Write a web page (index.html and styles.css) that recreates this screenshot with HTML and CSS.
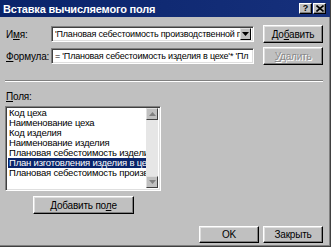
FILE: index.html
```html
<!DOCTYPE html>
<html>

<head>
    <meta charset="utf-8">
    <title>Вставка вычисляемого поля</title>
    <link rel="stylesheet" href="styles.css">
</head>

<body>
    <div class="dialog">
        <div class="titlebar">
            <span class="title">Вставка вычисляемого поля</span>
            <div class="caption-btns">
                <span class="cbtn">?</span>
                <span class="cbtn">
                    <svg width="8" height="7" viewBox="0 0 8 7">
                        <path d="M0.5 0.5 L7.5 6.5 M7.5 0.5 L0.5 6.5" stroke="#000" stroke-width="1.6" />
                    </svg>
                </span>
            </div>
        </div>

        <div class="content">
            <div class="row">
                <span class="lbl">И<u>м</u>я:</span>
                <div class="field combo">
                    <span class="text">'Плановая себестоимость производственной п</span>
                    <span class="drop">
                        <svg width="7" height="4" viewBox="0 0 7 4"><path d="M0 0 H7 L3.5 4 Z" fill="#000" /></svg>
                    </span>
                </div>
                <button class="btn side">До<u>б</u>авить</button>
            </div>
            <div class="row">
                <span class="lbl"><u>Ф</u>ормула:</span>
                <div class="field">
                    <span class="text">= 'Плановая себестоимость изделия в цехе'* 'Пл</span>
                </div>
                <button class="btn side disabled"><u>У</u>далить</button>
            </div>

            <div class="sep"></div>

            <span class="lbl fields-lbl"><u>П</u>оля:</span>
            <div class="list">
                <ul class="items">
                    <li>Код цеха</li>
                    <li>Наименование цеха</li>
                    <li>Код изделия</li>
                    <li>Наименование изделия</li>
                    <li>Плановая себестоимость изделия</li>
                    <li class="selected">План изготовления изделия в цех</li>
                    <li>Плановая себестоимость произво</li>
                </ul>
                <div class="scrollbar">
                    <span class="arrow">
                        <svg width="7" height="4" viewBox="0 0 7 4"><path d="M0 4 H7 L3.5 0 Z" fill="#808080" /></svg>
                    </span>
                    <span class="track"></span>
                    <span class="arrow">
                        <svg width="7" height="4" viewBox="0 0 7 4"><path d="M0 0 H7 L3.5 4 Z" fill="#808080" /></svg>
                    </span>
                </div>
            </div>

            <button class="btn add-field">Добавить по<u>л</u>е</button>

            <div class="footer">
                <button class="btn foot">OK</button>
                <button class="btn foot">Закрыть</button>
            </div>
        </div>
    </div>
</body>

</html>
```

FILE: styles.css
```css
body {
    margin: 0;
    padding: 0;
    background-color: #ffffff;
    font-family: "Liberation Sans", Arial, sans-serif;
    font-size: 10px;
    letter-spacing: -0.2px;
    color: #000000;
}

.dialog {
    width: 331px;
    height: 247px;
    box-sizing: border-box;
    background-color: #c0c0c0;
    border-right: 1px solid #404040;
    border-bottom: 1px solid #404040;
    box-shadow: inset -1px -1px 0 #808080;
    display: flex;
    flex-direction: column;
}

.titlebar {
    height: 17px;
    flex: none;
    display: flex;
    align-items: center;
    justify-content: space-between;
    padding: 0 4px 0 3px;
    background: linear-gradient(to right, #0a246a, #16307c);
}

.title {
    color: #ffffff;
    font-weight: bold;
    font-size: 11px;
    letter-spacing: -0.2px;
}

.caption-btns {
    display: flex;
    gap: 1px;
}

.cbtn {
    width: 13px;
    height: 11px;
    box-sizing: border-box;
    background-color: #c0c0c0;
    border-top: 1px solid #ffffff;
    border-left: 1px solid #ffffff;
    border-right: 1px solid #000000;
    border-bottom: 1px solid #000000;
    box-shadow: inset -1px -1px 0 #808080;
    display: flex;
    align-items: center;
    justify-content: center;
    font-weight: bold;
    font-size: 9px;
    line-height: 9px;
}

.content {
    flex: 1;
    padding: 8px 7px 0 5px;
    display: flex;
    flex-direction: column;
}

.row {
    display: flex;
    align-items: center;
    height: 18px;
    margin-bottom: 4px;
}

.lbl {
    width: 45px;
    padding-left: 1px;
    flex: none;
}

.field {
    width: 204px;
    min-width: 0;
    height: 16px;
    box-sizing: border-box;
    background-color: #ffffff;
    border-top: 1px solid #808080;
    border-left: 1px solid #808080;
    border-right: 1px solid #ffffff;
    border-bottom: 1px solid #ffffff;
    box-shadow: inset 1px 1px 0 #404040, inset -1px -1px 0 #dfdfdf;
    display: flex;
    align-items: center;
    overflow: hidden;
    padding-left: 3px;
}

.field .text {
    font-size: 9px;
    letter-spacing: -0.2px;
    white-space: nowrap;
    overflow: hidden;
    flex: 1;
    min-width: 0;
}

.combo {
    width: 203px;
    padding-right: 2px;
}

.drop {
    width: 11px;
    height: 12px;
    flex: none;
    box-sizing: border-box;
    background-color: #c0c0c0;
    border-top: 1px solid #dfdfdf;
    border-left: 1px solid #dfdfdf;
    border-right: 1px solid #000000;
    border-bottom: 1px solid #000000;
    display: flex;
    align-items: center;
    justify-content: center;
}

.btn {
    font-family: "Liberation Sans", Arial, sans-serif;
    font-size: 10px;
    letter-spacing: -0.2px;
    color: #000000;
    background-color: #c0c0c0;
    box-sizing: border-box;
    border-top: 1px solid #ffffff;
    border-left: 1px solid #ffffff;
    border-right: 1px solid #000000;
    border-bottom: 1px solid #000000;
    box-shadow: inset -1px -1px 0 #808080, inset 1px 1px 0 #dfdfdf;
    padding: 0;
    cursor: pointer;
}

.side {
    width: 60px;
    height: 18px;
    margin-left: 9px;
}

.disabled {
    color: #8a8a8a;
    text-shadow: 1px 1px 0 #ffffff;
}

.sep {
    height: 0;
    border-top: 1px solid #808080;
    border-bottom: 1px solid #ffffff;
    margin: 11px 0 0 0;
}

.fields-lbl {
    margin-top: 9px;
    line-height: 12px;
}

.list {
    margin-top: 3px;
    width: 156px;
    height: 85px;
    box-sizing: border-box;
    background-color: #ffffff;
    border-top: 1px solid #808080;
    border-left: 1px solid #808080;
    border-right: 1px solid #ffffff;
    border-bottom: 1px solid #ffffff;
    box-shadow: inset 1px 1px 0 #404040, inset -1px -1px 0 #dfdfdf;
    padding: 1px 2px 2px 2px;
    display: flex;
}

.items {
    list-style: none;
    margin: 0;
    padding: 0;
    flex: 1;
    min-width: 0;
    overflow: hidden;
    font-size: 9.5px;
}

.items li {
    height: 10px;
    line-height: 10px;
    padding-left: 1px;
    white-space: nowrap;
    overflow: hidden;
}

.items li.selected {
    background-color: #0a246a;
    color: #ffffff;
}

.scrollbar {
    width: 12px;
    flex: none;
    display: flex;
    flex-direction: column;
    background-color: #e6e6e6;
}

.arrow {
    height: 12px;
    box-sizing: border-box;
    background-color: #c0c0c0;
    border-top: 1px solid #dfdfdf;
    border-left: 1px solid #dfdfdf;
    border-right: 1px solid #404040;
    border-bottom: 1px solid #404040;
    display: flex;
    align-items: center;
    justify-content: center;
}

.track {
    flex: 1;
}

.add-field {
    width: 101px;
    height: 18px;
    margin: 5px 0 0 28px;
}

.footer {
    display: flex;
    justify-content: flex-end;
    gap: 4px;
    margin-top: 12px;
}

.foot {
    width: 60px;
    height: 17px;
}
```
